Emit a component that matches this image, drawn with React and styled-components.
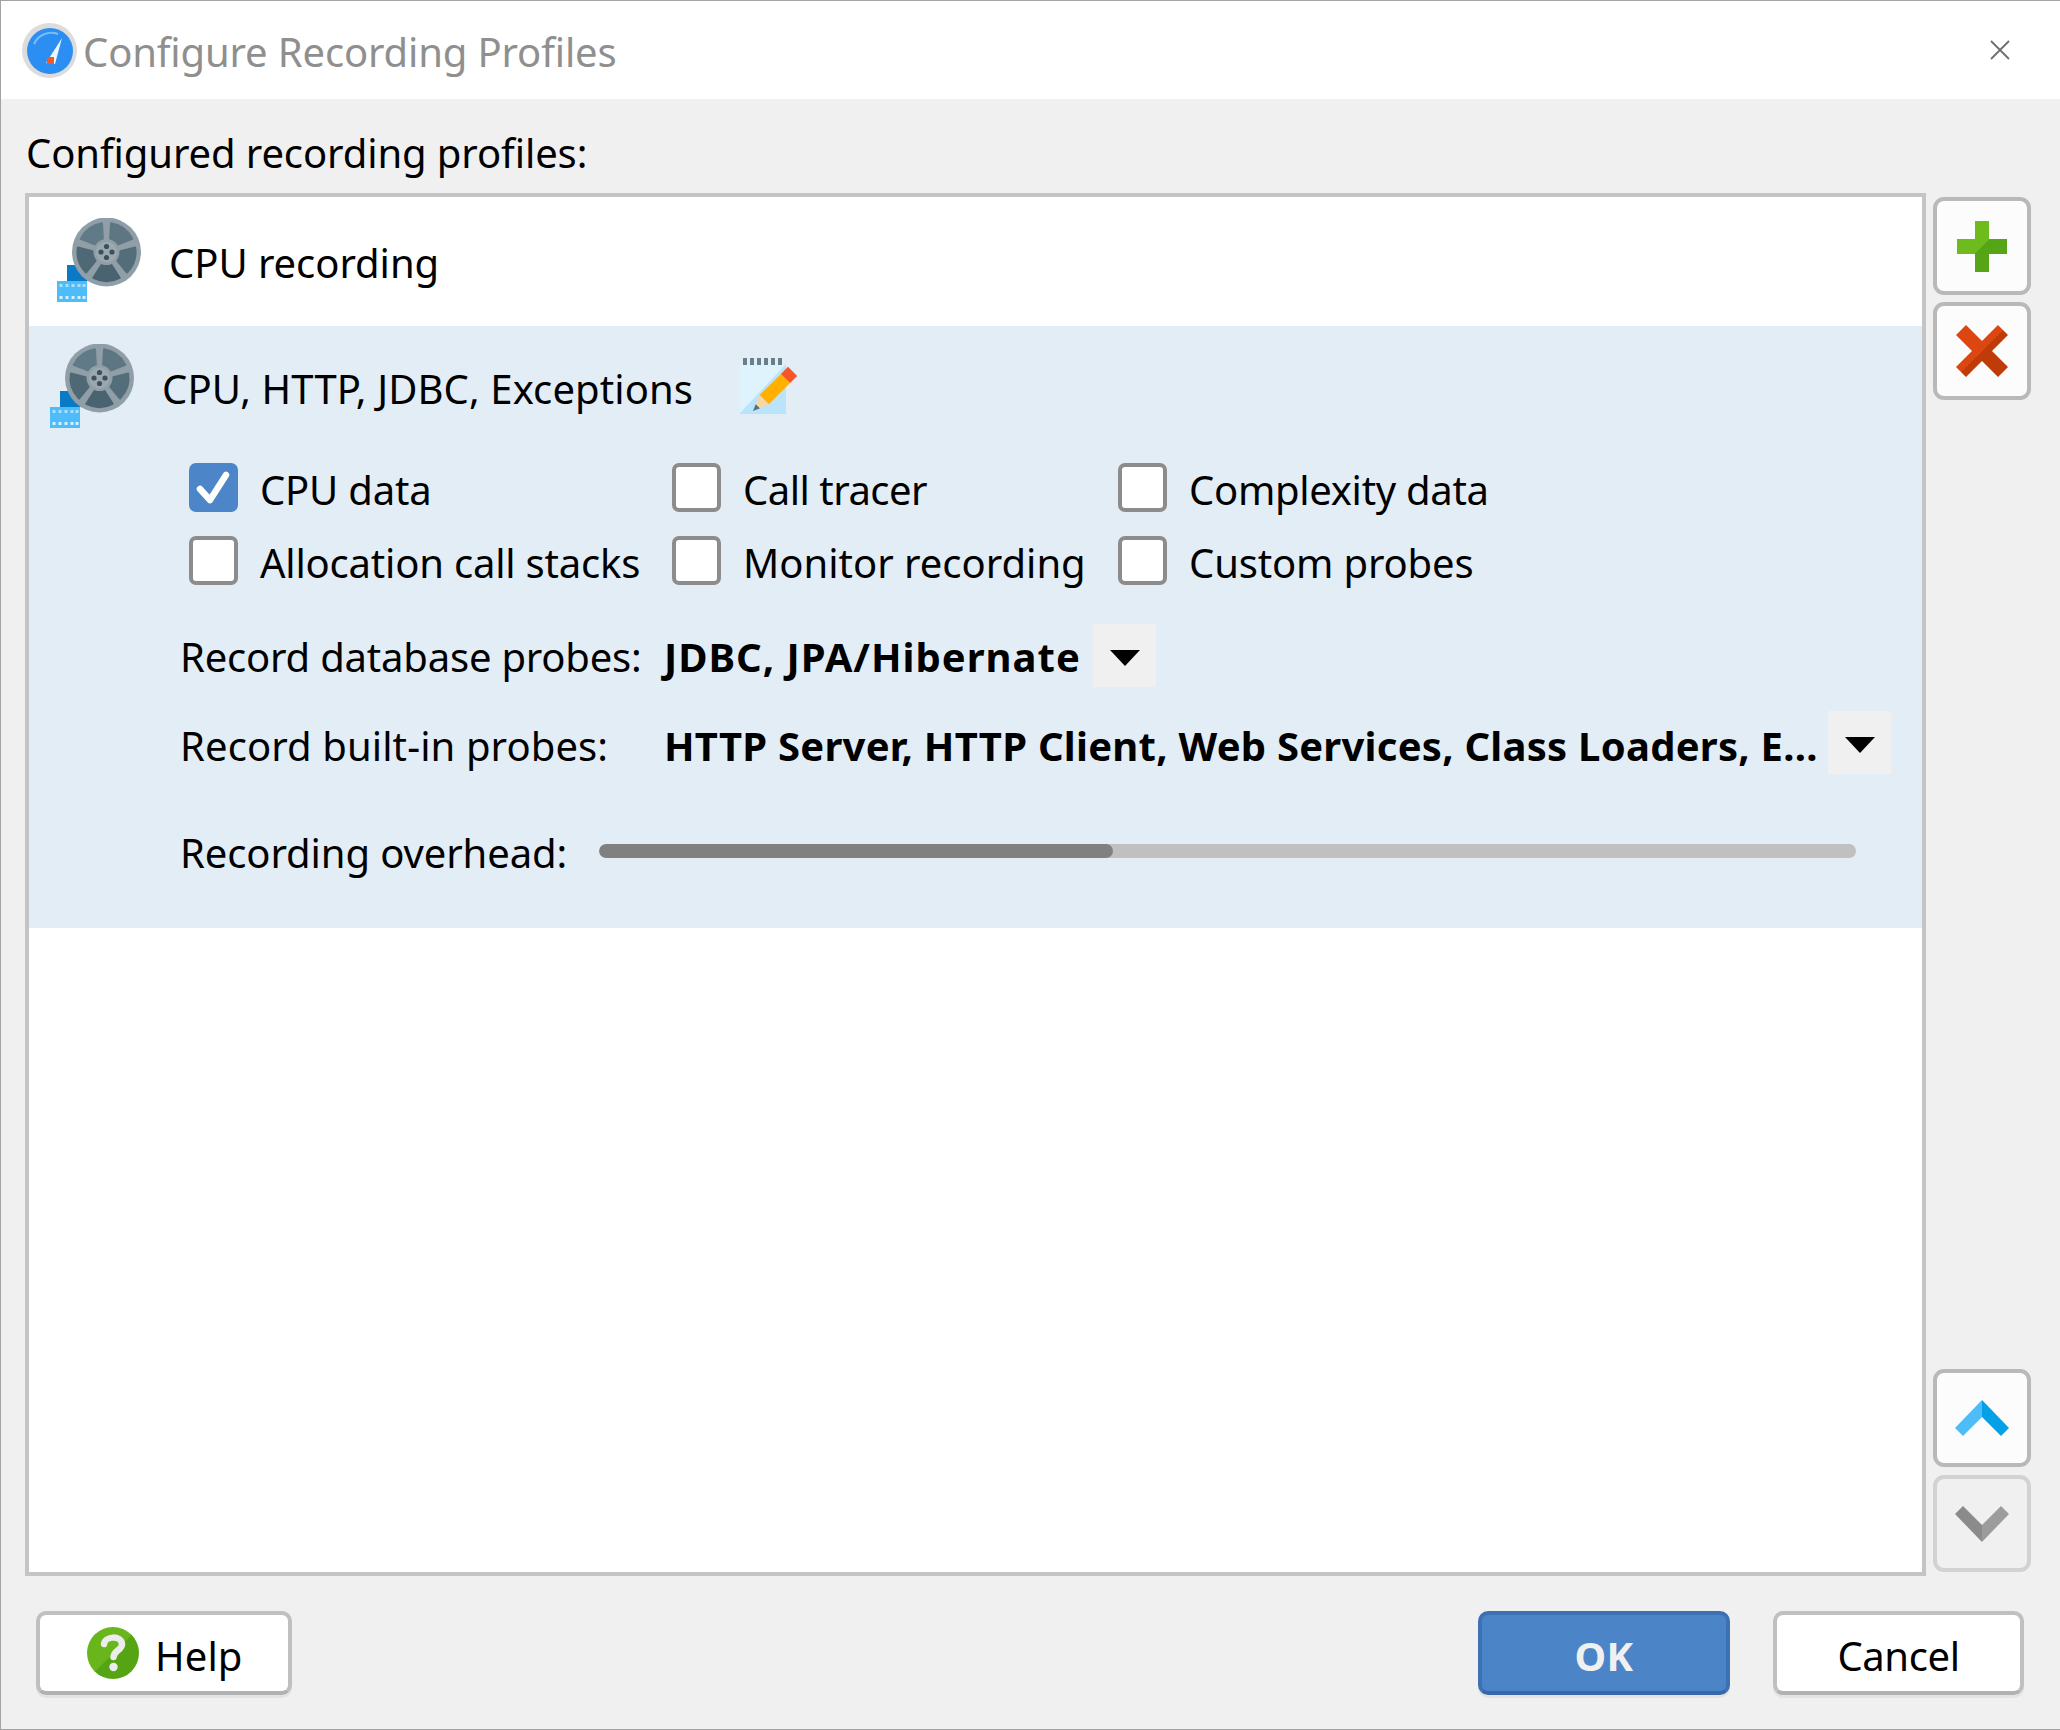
import React from "react";
import styled, { createGlobalStyle } from "styled-components";

const GlobalStyle = createGlobalStyle`
  * { box-sizing: border-box; }
  html, body { margin: 0; padding: 0; background: #f0f0f0; }
  body { font-family: "Noto Sans", "Open Sans", sans-serif; color: #000; }
`;

const Window = styled.div`
  width: 2060px;
  height: 1730px;
  display: flex;
  flex-direction: column;
  border-top: 1px solid #a3a3a3;
  border-left: 1px solid #a3a3a3;
  border-bottom: 1px solid #a3a3a3;
`;

const TitleBar = styled.div`
  height: 98px;
  flex: none;
  display: flex;
  align-items: center;
  padding: 0 50px 0 21px;
  background: #fff;
`;

const Text = styled.span`
  font-size: 40px;
  line-height: 54px;
  white-space: nowrap;
  letter-spacing: ${(p) => p.$track ?? 0}px;
  font-weight: ${(p) => (p.$bold ? 700 : 400)};
  color: ${(p) => p.$color || "#000"};
`;

const TitleText = styled(Text)`
  margin-left: 6px;
  flex: 1;
  position: relative;
  top: 2px;
`;

const CloseButton = styled.svg`
  width: 20px;
  height: 20px;
  flex: none;
`;

const Body = styled.div`
  flex: 1;
  display: flex;
  flex-direction: column;
  padding: 0 29px 0 24px;
  background: #f0f0f0;
`;

const Heading = styled.div`
  height: 94px;
  flex: none;
  padding: 27px 0 0 1px;
`;

const Main = styled.div`
  height: 1383px;
  flex: none;
  display: flex;
  gap: 7px;
`;

const ProfileList = styled.div`
  width: 1901px;
  flex: none;
  border: 4px solid #c4c4c4;
  background: #fff;
`;

const ProfileRow = styled.div`
  height: 129px;
  display: flex;
  align-items: center;
  padding: 0 0 3px 28px;
`;

const SelectedProfile = styled.div`
  height: 602px;
  padding: 18px 0 0 21px;
  background: #e3edf6;
`;

const ProfileHead = styled.div`
  height: 84px;
  display: flex;
  align-items: center;
`;

const ProfileName = styled(Text)`
  margin: ${(p) => p.$top}px 0 0 ${(p) => p.$left}px;
`;

const NoteIcon = styled.svg`
  width: 58px;
  height: 57px;
  flex: none;
  margin-left: 47px;
`;

const CheckGrid = styled.div`
  display: grid;
  grid-template-columns: 483px 446px auto;
  grid-auto-rows: 49px;
  row-gap: 24px;
  margin: 35px 0 0 139px;
`;

const CheckItem = styled.label`
  display: flex;
  align-items: center;
  gap: 22px;
  ${Text} { margin-top: 4px; }
`;

const CheckBox = styled.span`
  width: 49px;
  height: 49px;
  flex: none;
  display: block;
  border-radius: 7px;
  border: 4px solid ${(p) => (p.$checked ? "#4d86c8" : "#8c8c8c")};
  background: ${(p) => (p.$checked ? "#4d86c8" : "#fff")};
`;

const CheckMark = styled.svg`
  display: block;
  width: 41px;
  height: 41px;
`;

const ComboRow = styled.div`
  height: 63px;
  display: flex;
  align-items: center;
  margin: ${(p) => p.$top}px 0 0 130px;
`;

const ComboLabel = styled.div`
  width: 484px;
  flex: none;
  padding-top: ${(p) => p.$pad}px;
`;

const ComboValue = styled.div`
  width: ${(p) => p.$width}px;
  flex: none;
  padding-top: ${(p) => p.$pad}px;
`;

const ComboArrow = styled.div`
  width: 63px;
  height: 63px;
  flex: none;
  display: flex;
  align-items: center;
  justify-content: center;
  background: #f0f0f0;
  &::before {
    content: "";
    margin-top: 4px;
    border-top: 16px solid #000;
    border-left: 15px solid transparent;
    border-right: 15px solid transparent;
  }
`;

const OverheadRow = styled.div`
  height: 54px;
  display: flex;
  align-items: center;
  margin: 51px 0 0 130px;
`;

const OverheadLabel = styled.div`
  width: 419px;
  flex: none;
  padding-top: 2px;
`;

const OverheadTrack = styled.div`
  width: 1257px;
  height: 14px;
  margin-bottom: 2px;
  border-radius: 7px;
  overflow: hidden;
  background: #c0c0c0;
`;

const OverheadFill = styled.div`
  height: 100%;
  border-radius: 7px;
  background: #808080;
`;

const SideColumn = styled.div`
  width: 98px;
  flex: none;
  display: flex;
  flex-direction: column;
  justify-content: space-between;
  padding: 4px 0;
`;

const SideGroup = styled.div`
  display: flex;
  flex-direction: column;
  gap: ${(p) => p.$gap}px;
`;

const SideButton = styled.div`
  width: 98px;
  height: ${(p) => p.$height || 98}px;
  display: flex;
  align-items: center;
  justify-content: center;
  border-radius: 11px;
  border: 4px solid ${(p) => (p.$disabled ? "#d2d2d2" : "#b9b9b9")};
  background: ${(p) => (p.$disabled ? "#f0f0f0" : "#fcfcfc")};
`;

const Footer = styled.div`
  flex: 1;
  display: flex;
  align-items: flex-start;
  padding: 35px 7px 0 11px;
`;

const Button = styled.div`
  width: ${(p) => p.$width}px;
  height: 84px;
  flex: none;
  display: flex;
  align-items: center;
  justify-content: ${(p) => (p.$start ? "flex-start" : "center")};
  gap: 16px;
  margin-left: ${(p) => p.$left || 0}px;
  padding: 5px 0 0 ${(p) => (p.$start ? 47 : 0)}px;
  border-radius: 10px;
  border: 4px solid ${(p) => (p.$primary ? "#3e70b4" : "#c0c0c0")};
  border-bottom-color: ${(p) => (p.$primary ? "#3768ab" : "#b2b2b2")};
  background: ${(p) => (p.$primary ? "#4c85c7" : "#fff")};
  box-shadow: 0 3px 0 rgba(0, 0, 0, 0.05);
`;

const HelpIcon = styled.svg`
  width: 52px;
  height: 52px;
  flex: none;
  margin-top: -6px;
`;

const spokeWindow = (angle, inner, outer, spread) => {
  const point = (r, a) => {
    const rad = ((a - 90) * Math.PI) / 180;
    return `${(r * Math.cos(rad)).toFixed(2)} ${(r * Math.sin(rad)).toFixed(2)}`;
  };
  const a = angle - spread;
  const b = angle + spread;
  return `M${point(inner, a + 6)} L${point(outer, a)} A${outer} ${outer} 0 0 1 ${point(outer, b)} L${point(inner, b - 6)} A${inner} ${inner} 0 0 0 ${point(inner, a + 6)} Z`;
};

const reelWindows = [
  { angle: 36, color: "#5d7682" },
  { angle: 108, color: "#546d7a" },
  { angle: 180, color: "#4a6370" },
  { angle: 252, color: "#4f6875" },
  { angle: 324, color: "#607a87" },
];

const stripDots = [4, 10, 16, 22, 27];

const ReelIcon = () => (
  <svg width="84" height="84" viewBox="0 0 84 84" style={{ flex: "none" }}>
    <rect x="10" y="47" width="44" height="16" fill="#0a79c6" />
    <rect x="0" y="63" width="30" height="21" fill="#4dbcf8" />
    {stripDots.map((x) => (
      <React.Fragment key={x}>
        <rect x={x - 1.5} y="66" width="3" height="3" fill="#a8e0fc" />
        <rect x={x - 1.5} y="78" width="3" height="3" fill="#d4f0fe" />
      </React.Fragment>
    ))}
    <circle cx="49.5" cy="34" r="34.5" fill="#8f9ea7" />
    <g transform="translate(49.5 34)">
      {reelWindows.map((w) => (
        <path
          key={w.angle}
          d={spokeWindow(w.angle, 14, 29, 27)}
          fill={w.color}
          stroke={w.color}
          strokeWidth="2"
          strokeLinejoin="round"
        />
      ))}
      <circle r="10.5" fill="#9aa8b0" />
      <circle cx="0" cy="-5.5" r="2.6" fill="#3f505a" />
      <circle cx="0" cy="5.5" r="2.6" fill="#3f505a" />
      <circle cx="-5.5" cy="0" r="2.6" fill="#3f505a" />
      <circle cx="5.5" cy="0" r="2.6" fill="#3f505a" />
    </g>
  </svg>
);

const GaugeIcon = () => (
  <svg width="55" height="55" viewBox="0 0 55 55" style={{ flex: "none" }}>
    <circle cx="27.5" cy="27.5" r="27.5" fill="#dcdcdc" />
    <circle cx="28" cy="28" r="23" fill="#2a8ef2" />
    <path d="M12 21 A19 19 0 0 1 36 11" fill="none" stroke="#7dbcf6" strokeWidth="2" />
    <path d="M40 15 L33 41 L24 40 Z" fill="#eef6fd" />
    <rect x="25" y="34" width="7" height="7" fill="#f0592b" />
  </svg>
);

const PlusIcon = () => (
  <svg width="50" height="51" viewBox="0 0 50 51">
    <defs>
      <linearGradient id="plusTone" gradientUnits="userSpaceOnUse" x1="0" y1="0" x2="50" y2="51">
        <stop offset="0.5" stopColor="#6dbb1c" />
        <stop offset="0.5" stopColor="#55a517" />
      </linearGradient>
    </defs>
    <path d="M18 0 H32 V18 H50 V33 H32 V51 H18 V33 H0 V18 H18 Z" fill="url(#plusTone)" />
  </svg>
);

const CrossIcon = () => (
  <svg width="52" height="52" viewBox="0 0 52 52">
    <defs>
      <linearGradient id="crossTone" gradientUnits="userSpaceOnUse" x1="0" y1="0" x2="52" y2="52">
        <stop offset="0.5" stopColor="#db4611" />
        <stop offset="0.5" stopColor="#bf3b08" />
      </linearGradient>
    </defs>
    <path d="M10 0 L26 16 L42 0 L52 10 L36 26 L52 42 L42 52 L26 36 L10 52 L0 42 L16 26 L0 10 Z" fill="url(#crossTone)" />
  </svg>
);

const Chevron = ({ left, right, flip }) => (
  <svg width="54" height="36" viewBox="0 0 54 36" style={{ transform: flip ? "scaleY(-1)" : "none" }}>
    <polygon points="27,0 27,17 8,36 0,28" fill={left} />
    <polygon points="27,0 54,28 46,36 27,17" fill={right} />
  </svg>
);

const PencilNote = () => (
  <NoteIcon viewBox="0 0 58 57">
    <polygon points="0,6 46,6 46,56 0,56" fill="#b9e4fb" />
    <polygon points="0,6 46,6 0,55" fill="#dff3fd" />
    {[3, 10, 17, 24, 31, 38].map((x) => (
      <rect key={x} x={x} y="0" width="4" height="7" fill="#67808c" />
    ))}
    <g transform="translate(13 53) rotate(-45)">
      <polygon points="0,0 7,-3 7,3" fill="#56707d" />
      <polygon points="7,-3 16,-6.5 16,6.5 7,3" fill="#f9d7a4" />
      <rect x="16" y="-6.5" width="30" height="13" fill="#ffb000" />
      <rect x="46" y="-6.5" width="10" height="13" fill="#f4562a" />
    </g>
  </NoteIcon>
);

const checks = [
  { label: "CPU data", checked: true, track: -0.2 },
  { label: "Call tracer", track: -0.5 },
  { label: "Complexity data", track: -0.3 },
  { label: "Allocation call stacks", track: -0.2 },
  { label: "Monitor recording", track: 0 },
  { label: "Custom probes", track: -0.15 },
];

export default function App() {
  return (
    <>
      <GlobalStyle />
      <Window>
        <TitleBar>
          <GaugeIcon />
          <TitleText $color="#8f8f8f" $track={-0.15}>Configure Recording Profiles</TitleText>
          <CloseButton viewBox="0 0 20 20">
            <path d="M1 1 L19 19 M19 1 L1 19" stroke="#6f6f6f" strokeWidth="1.8" fill="none" />
          </CloseButton>
        </TitleBar>
        <Body>
          <Heading>
            <Text $track={-0.1}>Configured recording profiles:</Text>
          </Heading>
          <Main>
            <ProfileList>
              <ProfileRow>
                <ReelIcon />
                <ProfileName $top={5} $left={28} $track={-0.05}>CPU recording</ProfileName>
              </ProfileRow>
              <SelectedProfile>
                <ProfileHead>
                  <ReelIcon />
                  <ProfileName $top={5} $left={28} $track={0.1}>CPU, HTTP, JDBC, Exceptions</ProfileName>
                  <PencilNote />
                </ProfileHead>
                <CheckGrid>
                  {checks.map((c) => (
                    <CheckItem key={c.label}>
                      <CheckBox $checked={c.checked}>
                        {c.checked && (
                          <CheckMark viewBox="0 0 41 41">
                            <path
                              d="M7 22 L17 33 L33 8"
                              fill="none"
                              stroke="#fff"
                              strokeWidth="6.5"
                              strokeLinecap="round"
                              strokeLinejoin="round"
                            />
                          </CheckMark>
                        )}
                      </CheckBox>
                      <Text $track={c.track}>{c.label}</Text>
                    </CheckItem>
                  ))}
                </CheckGrid>
                <ComboRow $top={39}>
                  <ComboLabel $pad={3}><Text $track={-0.2}>Record database probes:</Text></ComboLabel>
                  <ComboValue $width={429} $pad={3}><Text $bold $track={1}>JDBC, JPA/Hibernate</Text></ComboValue>
                  <ComboArrow />
                </ComboRow>
                <ComboRow $top={24}>
                  <ComboLabel $pad={6}><Text $track={0.1}>Record built-in probes:</Text></ComboLabel>
                  <ComboValue $width={1164} $pad={6}>
                    <Text $bold $track={0.25}>HTTP Server, HTTP Client, Web Services, Class Loaders, E...</Text>
                  </ComboValue>
                  <ComboArrow />
                </ComboRow>
                <OverheadRow>
                  <OverheadLabel><Text $track={-0.1}>Recording overhead:</Text></OverheadLabel>
                  <OverheadTrack>
                    <OverheadFill style={{ width: `${(514 / 1257) * 100}%` }} />
                  </OverheadTrack>
                </OverheadRow>
              </SelectedProfile>
            </ProfileList>
            <SideColumn>
              <SideGroup $gap={7}>
                <SideButton><PlusIcon /></SideButton>
                <SideButton><CrossIcon /></SideButton>
              </SideGroup>
              <SideGroup $gap={8}>
                <SideButton><Chevron left="#4dbcf8" right="#05a0e6" /></SideButton>
                <SideButton $disabled $height={97}><Chevron left="#8b8b8b" right="#9c9c9c" flip /></SideButton>
              </SideGroup>
            </SideColumn>
          </Main>
          <Footer>
            <Button $width={256} $start>
              <HelpIcon viewBox="0 0 52 52">
                <defs>
                  <linearGradient id="helpTone" gradientUnits="userSpaceOnUse" x1="0" y1="0" x2="52" y2="52">
                    <stop offset="0.5" stopColor="#69b61c" />
                    <stop offset="0.5" stopColor="#54a414" />
                  </linearGradient>
                </defs>
                <circle cx="26" cy="26" r="26" fill="url(#helpTone)" />
                <path
                  d="M17 17 C18 9 34 8 35 17 C35.5 23 27 23 26.5 30"
                  fill="none"
                  stroke="#ececec"
                  strokeWidth="6.5"
                  strokeLinecap="round"
                />
                <circle cx="26.5" cy="40" r="4.2" fill="#ececec" />
              </HelpIcon>
              <Text $track={0.1}>Help</Text>
            </Button>
            <Button $width={252} $primary $left={1186}>
              <Text $bold $color="#f0f0f0" $track={0.5}>OK</Text>
            </Button>
            <Button $width={251} $left={43}>
              <Text $track={-0.4}>Cancel</Text>
            </Button>
          </Footer>
        </Body>
      </Window>
    </>
  );
}
